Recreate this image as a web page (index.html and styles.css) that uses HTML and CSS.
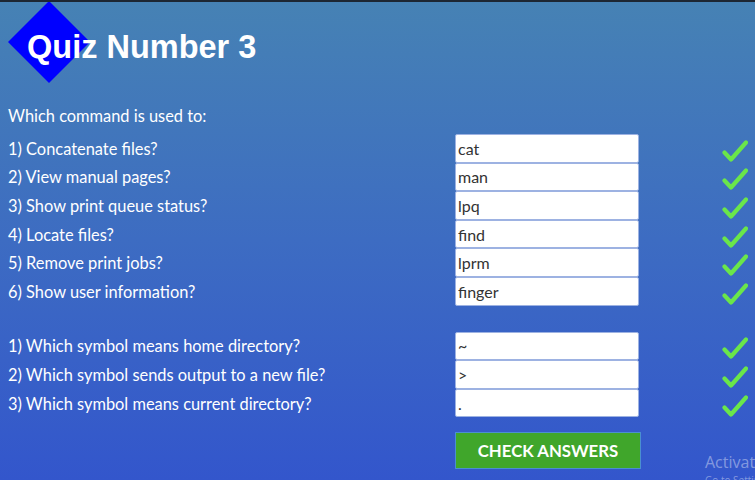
FILE: index.html
```html
<!DOCTYPE html>
<html>
<head>
<meta charset="utf-8">
<link rel="stylesheet" href="styles.css">
</head>
<body>
<div class="page">
  <header class="header">
    <div class="diamond"></div>
    <h1 class="title">Quiz Number 3</h1>
  </header>
  <p class="intro">Which command is used to:</p>
  <div class="group">
    <div class="row"><span class="label">1) Concatenate files?</span><input class="answer" type="text" value="cat"><svg class="check" viewBox="0 0 26 22"><path d="M2.5 12.5 L9 19.5 L24 2.5"/></svg></div>
    <div class="row"><span class="label">2) View manual pages?</span><input class="answer" type="text" value="man"><svg class="check" viewBox="0 0 26 22"><path d="M2.5 12.5 L9 19.5 L24 2.5"/></svg></div>
    <div class="row"><span class="label">3) Show print queue status?</span><input class="answer" type="text" value="lpq"><svg class="check" viewBox="0 0 26 22"><path d="M2.5 12.5 L9 19.5 L24 2.5"/></svg></div>
    <div class="row"><span class="label">4) Locate files?</span><input class="answer" type="text" value="find"><svg class="check" viewBox="0 0 26 22"><path d="M2.5 12.5 L9 19.5 L24 2.5"/></svg></div>
    <div class="row"><span class="label">5) Remove print jobs?</span><input class="answer" type="text" value="lprm"><svg class="check" viewBox="0 0 26 22"><path d="M2.5 12.5 L9 19.5 L24 2.5"/></svg></div>
    <div class="row"><span class="label">6) Show user information?</span><input class="answer" type="text" value="finger"><svg class="check" viewBox="0 0 26 22"><path d="M2.5 12.5 L9 19.5 L24 2.5"/></svg></div>
  </div>
  <div class="group group2">
    <div class="row"><span class="label">1) Which symbol means home directory?</span><input class="answer" type="text" value="~"><svg class="check" viewBox="0 0 26 22"><path d="M2.5 12.5 L9 19.5 L24 2.5"/></svg></div>
    <div class="row"><span class="label">2) Which symbol sends output to a new file?</span><input class="answer" type="text" value="&gt;"><svg class="check" viewBox="0 0 26 22"><path d="M2.5 12.5 L9 19.5 L24 2.5"/></svg></div>
    <div class="row"><span class="label">3) Which symbol means current directory?</span><input class="answer" type="text" value="."><svg class="check" viewBox="0 0 26 22"><path d="M2.5 12.5 L9 19.5 L24 2.5"/></svg></div>
  </div>
  <div class="actions">
    <button class="submit" type="button">CHECK ANSWERS</button>
  </div>
</div>
<div class="watermark">
  <div class="wm-big">Activate Windows</div>
  <div class="wm-small">Go to Settings to activate Windows.</div>
</div>
</body>
</html>
```
FILE: styles.css
```css
html, body {
  margin: 0;
  height: 100%;
  overflow: hidden;
}
body {
  border-top: 2px solid #1d2733;
  box-sizing: border-box;
  background: linear-gradient(to bottom, #4682b4 0%, #3d6cc2 50%, #3356cc 100%);
  font-family: Lato, "Open Sans", sans-serif;
  color: #fff;
  position: relative;
}
.page {
  padding: 0 8px;
}
.header {
  position: relative;
  padding-top: 27px;
  height: 36px;
}
.diamond {
  position: absolute;
  left: 12px;
  top: 11px;
  width: 58px;
  height: 58px;
  background: #0000ff;
  transform: rotate(45deg);
}
.title {
  position: relative;
  margin: 0 0 0 19px;
  font-family: "Liberation Sans", Arial, sans-serif;
  font-weight: bold;
  font-size: 32.5px;
  line-height: 36px;
  color: #fff;
}
.intro {
  margin: 37px 0 4px;
  font-size: 16.4px;
  line-height: 28px;
}
.group {
  display: flex;
  flex-direction: column;
}
.group2 {
  margin-top: 26px;
}
.row {
  display: grid;
  grid-template-columns: 447px 184px 1fr;
  align-items: center;
  height: 28.6px;
}
.label {
  font-size: 16.4px;
}
.answer {
  box-sizing: border-box;
  width: 184px;
  height: 28.6px;
  margin: 0;
  padding: 0 2px;
  border: 1px solid #9db2e2;
  border-radius: 2px;
  background: #fff;
  font-family: Lato, "Open Sans", sans-serif;
  font-size: 16px;
  color: #333;
  outline: none;
}
.check {
  width: 26px;
  height: 22px;
  margin-left: 83px;
  margin-top: 5px;
  fill: none;
  stroke: #6ae64a;
  stroke-width: 4.2;
  stroke-linecap: round;
  stroke-linejoin: round;
}
.actions {
  margin-top: 15px;
  padding-left: 447px;
}
.submit {
  width: 186px;
  height: 37px;
  margin: 0;
  padding: 0;
  border: 1px solid #4b8fd0;
  background: #40a62b;
  color: #fff;
  font-family: Lato, "Open Sans", sans-serif;
  font-weight: bold;
  font-size: 16.8px;
  cursor: pointer;
}
.watermark {
  position: absolute;
  left: 705px;
  top: 449px;
  white-space: nowrap;
  font-family: "Open Sans", sans-serif;
  color: rgba(255, 255, 255, 0.4);
}
.wm-big {
  font-size: 16px;
  line-height: 22px;
}
.wm-small {
  font-size: 10px;
  line-height: 14px;
}
```
